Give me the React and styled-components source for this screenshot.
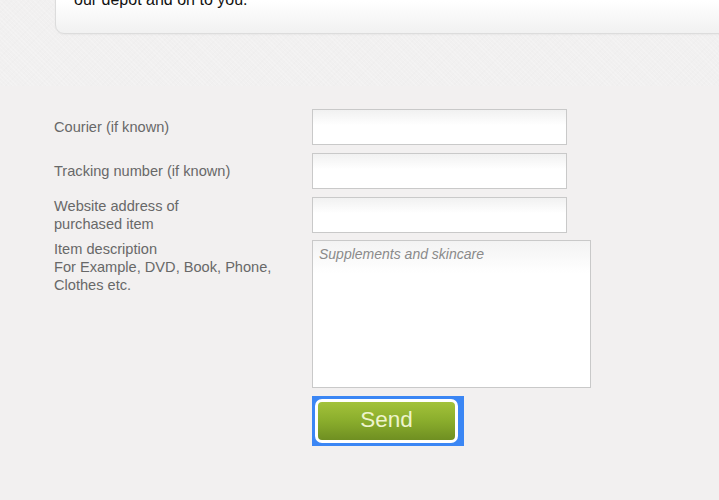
import React from "react";
import styled, { createGlobalStyle } from "styled-components";

const Global = createGlobalStyle`
  html, body { margin: 0; padding: 0; }
  body {
    background: #f2f0f0;
    font-family: "Liberation Sans", Arial, sans-serif;
    overflow: hidden;
  }
`;

const Page = styled.div`
  width: 719px;
  height: 500px;
  overflow: hidden;
`;

const Header = styled.div`
  height: 86px;
  background-color: #f1f0f0;
  background-image:
    repeating-linear-gradient(45deg, rgba(255,255,255,0.18) 0 1px, transparent 1px 3px),
    repeating-linear-gradient(-45deg, rgba(0,0,0,0.008) 0 1px, transparent 1px 4px);
  overflow: hidden;
`;

const Card = styled.div`
  margin: -40px -20px 0 55px;
  padding: 29px 18px 23px;
  border: 1px solid #dcdcdc;
  border-radius: 9px;
  background: linear-gradient(#ffffff 0%, #ffffff 55%, #f1f1f1 100%);
  box-shadow: 0 1px 2px rgba(0, 0, 0, 0.04);
  font-size: 16px;
  line-height: 20px;
  color: #111;
`;

const Form = styled.form`
  display: grid;
  grid-template-columns: 258px auto;
  row-gap: 8px;
  padding: 23px 0 0 54px;
`;

const Label = styled.label`
  align-self: ${(p) => (p.$top ? "start" : "center")};
  margin-top: ${(p) => (p.$top ? "-1px" : "0")};
  font-size: 14.6px;
  line-height: 18px;
  color: #686868;
  white-space: pre-line;
`;

const Field = styled.input`
  box-sizing: border-box;
  width: 255px;
  height: 36px;
  margin: 0;
  border: 1px solid #c9c9c9;
  background: linear-gradient(#f1f1f1 0%, #ffffff 45%, #ffffff 100%);
  font: 14px "Liberation Sans", Arial, sans-serif;
  padding: 0 6px;
  outline: none;
`;

const Area = styled.textarea`
  box-sizing: border-box;
  width: 279px;
  height: 148px;
  margin: -1px 0 0;
  border: 1px solid #c9c9c9;
  background: linear-gradient(#f3f3f3 0%, #ffffff 22%, #ffffff 100%);
  font: italic 14px/18px "Liberation Sans", Arial, sans-serif;
  padding: 4px 6px;
  resize: none;
  outline: none;
  &::placeholder { color: #8a8a8a; }
`;

const Focus = styled.div`
  grid-column: 2;
  width: 152px;
  height: 50px;
  box-sizing: border-box;
  padding: 3px 6px 3px 3px;
  background: #3b86f4;
  margin-top: 0;
`;

const SendButton = styled.button`
  box-sizing: border-box;
  width: 100%;
  height: 100%;
  border: 3px solid #ffffff;
  border-radius: 7px;
  background: linear-gradient(#a3c23a 0%, #8aad2c 50%, #6f8f22 100%);
  color: #eef4cc;
  font: 22.5px "Liberation Sans", Arial, sans-serif;
  cursor: pointer;
  padding: 0 0 3px;
`;

export default function App() {
  return (
    <Page>
      <Global />
      <Header>
        <Card>our depot and on to you.</Card>
      </Header>
      <Form onSubmit={(e) => e.preventDefault()}>
        <Label>Courier (if known)</Label>
        <Field type="text" />
        <Label>Tracking number (if known)</Label>
        <Field type="text" />
        <Label>{"Website address of\npurchased item"}</Label>
        <Field type="text" />
        <Label $top>{"Item description\nFor Example, DVD, Book, Phone,\nClothes etc."}</Label>
        <Area placeholder="Supplements and skincare" />
        <Focus>
          <SendButton type="submit">Send</SendButton>
        </Focus>
      </Form>
    </Page>
  );
}
